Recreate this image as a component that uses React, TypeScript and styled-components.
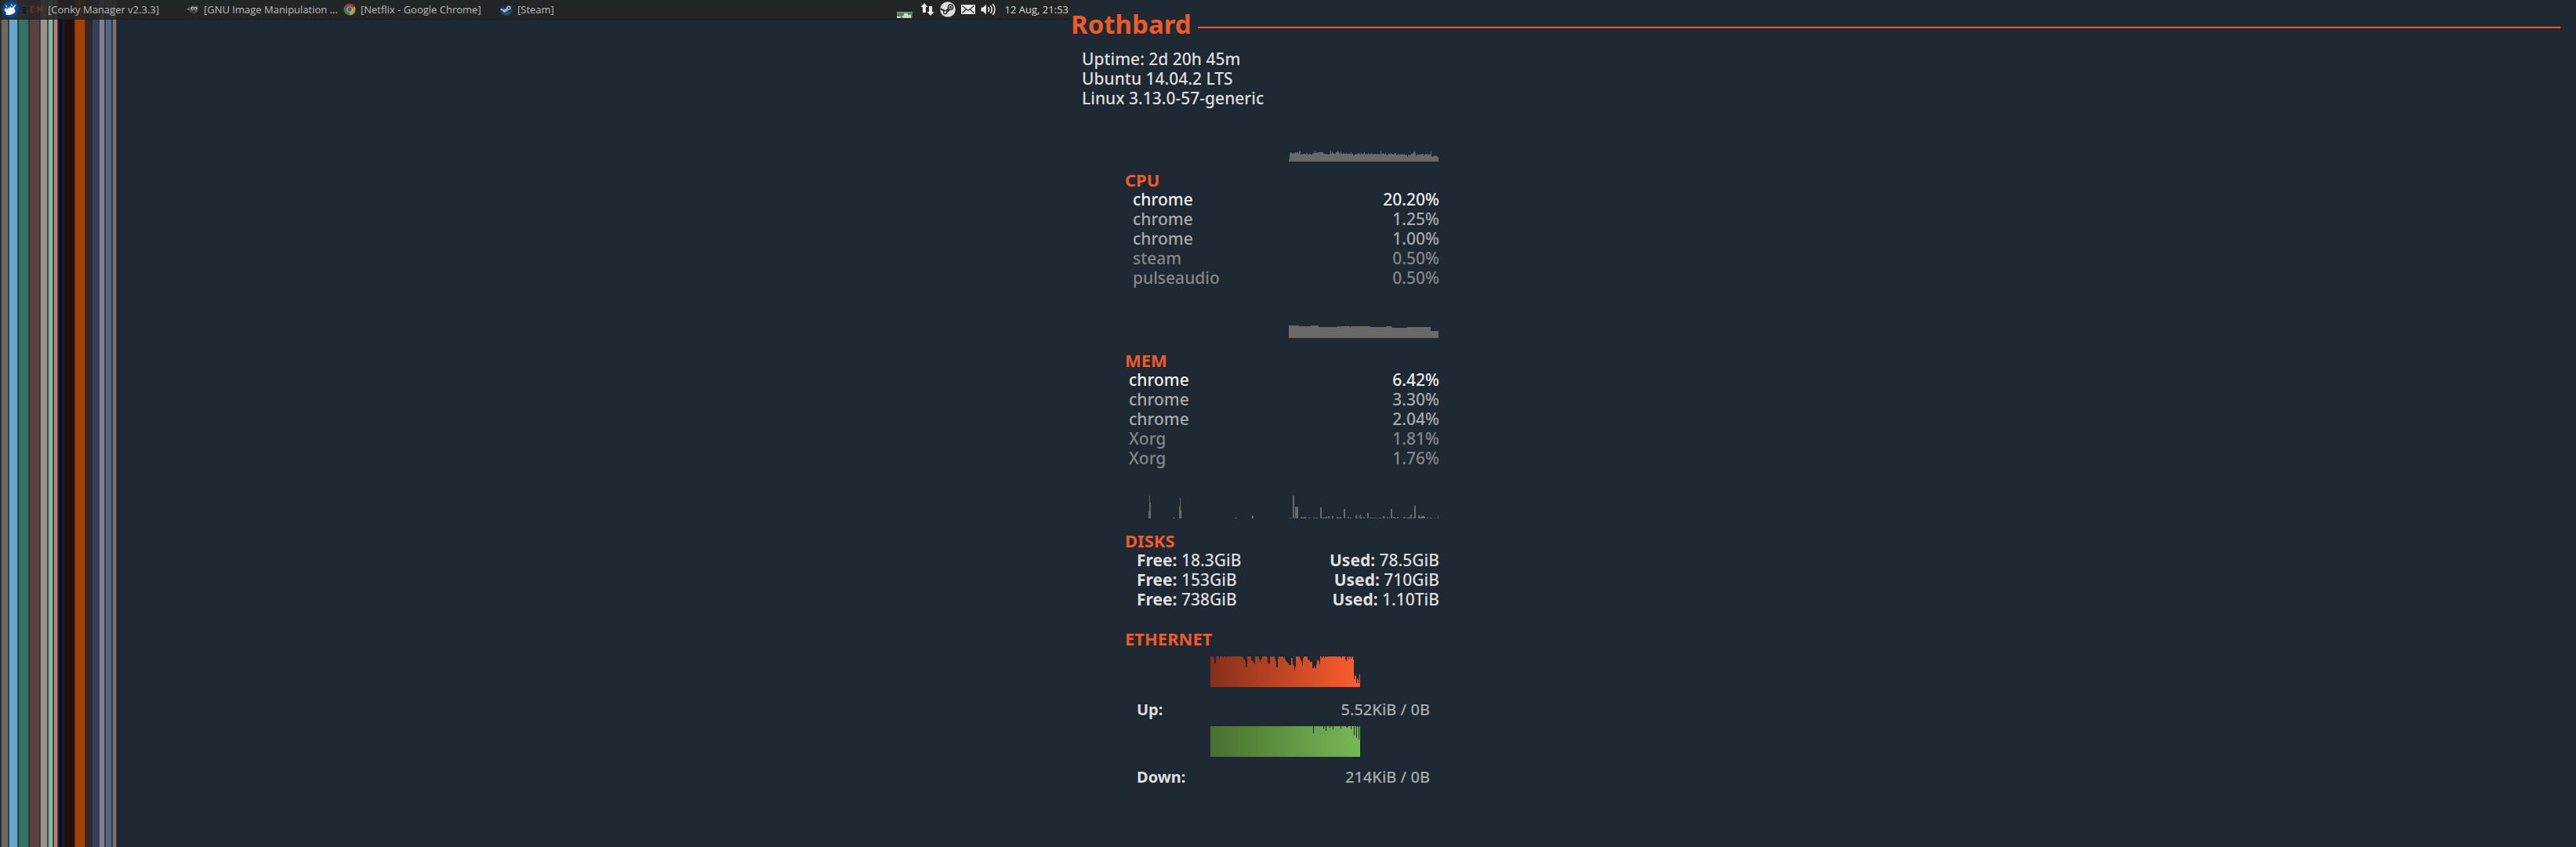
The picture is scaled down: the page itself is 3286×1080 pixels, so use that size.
import React from "react";
import styled, { createGlobalStyle, css } from "styled-components";

const colors = {
  desktop: "#1e2934",
  accent: "#f05a28",
  bright: "#efefef",
  text: "#dedede",
  muted: "#a9a9a9",
  dim: "#868686",
  graph: "#696969",
};

const GlobalStyle = createGlobalStyle`
  *, *::before, *::after { box-sizing: border-box; }
  body { margin: 0; background: ${colors.desktop}; }
  h1, h2, p, ul, dl, dd { margin: 0; padding: 0; }
  ul { list-style: none; }
`;

const Desktop = styled.div`
  display: grid;
  grid-template-columns: 683fr 960fr;
  min-height: 100vh;
  background: ${colors.desktop};
`;

/* ---------- left monitor ---------- */

const LeftMonitor = styled.section`
  display: grid;
  grid-template-columns: minmax(0, 1fr);
  grid-template-rows: 25px 1fr;
`;

const Stripes = styled.div`
  grid-row: 1 / 3;
  grid-column: 1;
  display: flex;
  padding-left: 2px;
`;

const Stripe = styled.div<{ $width: number; $gap: number; $color: string }>`
  flex: none;
  width: ${(p) => p.$width}px;
  margin-right: ${(p) => p.$gap}px;
  background: ${(p) => p.$color};
  box-shadow: 0 0 0 1px ${(p) => p.$color}44;
`;

const Panel = styled.header`
  grid-row: 1;
  grid-column: 1;
  z-index: 1;
  display: flex;
  align-items: center;
  padding: 0 3px 1px 2px;
  background: rgba(36, 37, 37, 0.88);
  border-bottom: 1px solid #1b1d1f;
  color: #b9b9b9;
  font: 400 13px/22px "Open Sans", "Noto Sans", sans-serif;
`;

const PanelButton = styled.button`
  display: flex;
  flex: none;
  padding: 0;
  border: 0;
  background: none;
  color: inherit;
`;

const Grip = styled.span`
  width: 4px;
  height: 8px;
  margin: 2px 5px 0 5px;
  background: repeating-linear-gradient(#121314 0 2px, transparent 2px 3px);
`;

const Tasks = styled.nav`
  display: flex;
  flex: 1;
  min-width: 0;
`;

const Task = styled.button`
  display: flex;
  align-items: center;
  gap: 6px;
  width: 200px;
  padding: 0;
  border: 0;
  background: none;
  color: inherit;
  font: inherit;
  text-align: left;
  white-space: nowrap;

  svg { flex: none; }
`;

const Tray = styled.div`
  display: flex;
  align-items: center;
  gap: 7px;
`;

const BatteryButton = styled(PanelButton)`
  align-self: flex-end;
  margin-right: 3px;
`;

const Clock = styled.time`
  margin-left: 4px;
  color: #d2d2d2;
`;

/* ---------- right monitor ---------- */

const RightMonitor = styled.main`
  padding: 8px 20px 0 0;
  color: ${colors.text};
  font: 500 21px/25px "Noto Sans", sans-serif;
`;

const HostHeader = styled.header`
  display: flex;
  align-items: center;
`;

const HostName = styled.h1`
  color: ${colors.accent};
  font-size: 33px;
  line-height: 45px;
  font-weight: 700;
`;

const Rule = styled.div`
  flex: 1;
  height: 2px;
  margin: 9px 0 0 8px;
  background: ${colors.accent};
`;

const SystemInfo = styled.div`
  padding: 10px 0 0 14px;
`;

const Stats = styled.div`
  width: 401px;
  margin-left: 69px;
`;

const Section = styled.section<{ $top?: number }>`
  padding-top: ${(p) => p.$top ?? 25}px;
`;

const SectionTitle = styled.h2`
  color: ${colors.accent};
  font-size: 22px;
  line-height: 25px;
  font-weight: 700;
`;

const GraphRow = styled.div<{ $gap: number }>`
  display: flex;
  justify-content: flex-end;
  gap: 9px;
  padding: 0 1px ${(p) => p.$gap}px 0;
`;

const NetGraph = styled.div<{ $top: number; $gap: number }>`
  padding: ${(p) => p.$top}px 0 ${(p) => p.$gap}px 109px;
`;

const GraphSvg = styled.svg`
  display: block;
  width: 191px;
  height: 39px;
`;

const toneColor = { bright: colors.bright, muted: colors.muted, dim: colors.dim };
type Tone = keyof typeof toneColor;

const ProcessTable = styled.table<{ $indent: number }>`
  width: 100%;
  border-collapse: collapse;

  td { padding: 0; }
  td:first-child { padding-left: ${(p) => p.$indent}px; }
  td:last-child { text-align: right; }
`;

const ProcessRow = styled.tr<{ $tone: Tone }>`
  color: ${(p) => toneColor[p.$tone]};
`;

const pairRow = css`
  display: flex;
  justify-content: space-between;
  padding-left: 15px;
`;

const DiskRow = styled.li`
  ${pairRow}
`;

const NetRow = styled.p`
  ${pairRow}
  padding-right: 12px;
  font-size: 20px;
`;

const Label = styled.b`
  font-weight: 700;
`;

const Rate = styled.span`
  color: ${colors.muted};
`;

/* ---------- data ---------- */

type Run = [count: number, value: number];
const expand = (runs: Run[]) => runs.flatMap(([n, v]) => Array<number>(n).fill(v));
const sparse = (length: number, base: number, points: Record<number, number>) =>
  Array.from({ length }, (_, i) => points[i] ?? base);

const GRAPH_W = 191;
const GRAPH_H = 39;

const cpu = [
  3, 11, 12, 11, 10, 10, 11, 11, 12, 11, 12, 11, 10, 13, 14, 10, 9, 9, 10, 10, 10, 9, 10, 11,
  9, 9, 10, 10, 9, 9, 10, 11, 11, 14, 11, 11, 12, 11, 12, 12, 12, 12, 12, 12, 10, 10, 10, 9,
  10, 9, 9, 9, 10, 14, 10, 12, 11, 10, 10, 10, 12, 12, 14, 12, 11, 10, 13, 10, 10, 11, 10, 10,
  10, 11, 10, 10, 10, 10, 10, 12, 10, 10, 8, 8, 9, 10, 9, 10, 10, 11, 10, 9, 11, 10, 9, 11,
  12, 10, 9, 10, 9, 11, 10, 9, 10, 11, 10, 9, 10, 10, 10, 9, 10, 10, 9, 10, 9, 14, 10, 10,
  11, 10, 9, 11, 9, 8, 9, 11, 10, 9, 11, 10, 9, 9, 10, 11, 10, 8, 9, 10, 8, 10, 9, 9,
  10, 9, 9, 10, 8, 9, 8, 6, 9, 9, 8, 9, 10, 10, 11, 12, 13, 11, 7, 9, 9, 9, 9, 9,
  10, 9, 10, 10, 7, 9, 10, 9, 10, 8, 10, 9, 9, 13, 6, 6, 7, 7, 8, 7, 7, 6, 6,
];

const mem = expand([
  [13, 16], [15, 15], [10, 16], [24, 14], [3, 15], [1, 14], [12, 15], [1, 14],
  [25, 15], [20, 14], [7, 15], [1, 14], [19, 13], [30, 14], [10, 9],
]);

const diskRead = sparse(GRAPH_W, 0, {
  21: 9, 22: 29, 23: 20, 52: 1, 53: 1, 54: 1, 60: 15, 61: 26, 62: 11, 63: 1,
  131: 1, 132: 1, 133: 1, 152: 1, 153: 4, 154: 3,
});

const diskWrite = sparse(GRAPH_W, 0, {
  1: 1, 2: 1, 5: 29, 6: 29, 8: 15, 9: 15, 10: 14, 11: 15, 15: 2, 16: 2, 17: 1, 18: 1, 19: 1,
  20: 2, 21: 2, 25: 1, 26: 1, 31: 1, 32: 1, 34: 1, 35: 1, 36: 1, 40: 14, 41: 14, 43: 1, 44: 1,
  45: 1, 46: 1, 47: 2, 48: 2, 50: 3, 51: 3, 55: 3, 56: 3, 61: 2, 62: 2, 63: 1, 64: 1, 65: 2,
  66: 2, 70: 12, 71: 12, 75: 2, 76: 2, 78: 1, 79: 1, 85: 4, 86: 5, 87: 1, 90: 4, 91: 5, 92: 1,
  93: 1, 95: 2, 96: 1, 100: 7, 101: 7, 104: 1, 105: 1, 106: 1, 108: 1, 109: 1, 111: 1, 115: 1,
  116: 1, 117: 1, 120: 3, 121: 3, 122: 1, 125: 2, 126: 1, 128: 1, 130: 12, 131: 12, 133: 2,
  134: 2, 135: 1, 136: 1, 138: 2, 139: 2, 146: 1, 147: 2, 148: 1, 150: 1, 151: 1, 152: 1,
  153: 2, 154: 1, 155: 5, 156: 5, 158: 1, 159: 1, 160: 16, 161: 16, 165: 4, 166: 4, 167: 2,
  168: 2, 169: 3, 170: 3, 171: 4, 172: 3, 173: 2, 176: 1, 177: 1, 180: 1, 181: 1, 182: 1,
  186: 1, 190: 4,
});

const upload = expand([
  [4, 0], [1, 3], [1, 10], [1, 8], [1, 1], [3, 0], [1, 3], [4, 0], [1, 2], [3, 0], [1, 1],
  [4, 0], [1, 1], [14, 0], [2, 1], [1, 4], [1, 3], [1, 6], [1, 14], [1, 13], [5, 0], [1, 5],
  [1, 6], [1, 5], [1, 8], [1, 10], [5, 0], [1, 4], [1, 7], [1, 4], [1, 3], [6, 0], [1, 1],
  [1, 8], [1, 10], [1, 9], [2, 0], [1, 1], [3, 0], [1, 3], [1, 6], [2, 14], [1, 3], [2, 0],
  [1, 1], [3, 0], [1, 2], [1, 1], [1, 4], [1, 6], [1, 7], [1, 8], [1, 9], [3, 11], [2, 2],
  [1, 10], [1, 12], [1, 18], [1, 13], [5, 0], [1, 2], [1, 5], [1, 7], [1, 11], [1, 2], [5, 0],
  [1, 4], [2, 5], [3, 7], [2, 15], [1, 13], [2, 15], [1, 10], [1, 5], [1, 4], [1, 6], [1, 10],
  [2, 0], [1, 2], [2, 0], [1, 2], [2, 0], [1, 1], [12, 0], [1, 1], [4, 0], [1, 1], [1, 2],
  [4, 0], [1, 4], [1, 6], [1, 1], [1, 0], [1, 4], [2, 0], [1, 3], [1, 1], [1, 0], [1, 4],
  [1, 29], [1, 24], [1, 25], [1, 34], [1, 28], [1, 30], [1, 34], [1, 23],
]).map((drop) => GRAPH_H - drop);

const download = sparse(GRAPH_W, GRAPH_H, {
  131: 30, 144: 36, 147: 33, 152: 37, 156: 35, 166: 36, 173: 38, 174: 37, 179: 35,
  183: 27, 186: 24, 188: 38, 189: 22,
});

const stripes: Array<[width: number, gap: number, color: string]> = [
  [8, 2, "#71675f"], [10, 2, "#66a9c6"], [12, 2, "#357263"], [12, 2, "#5b413d"],
  [8, 2, "#9c938c"], [5, 2, "#86b79d"], [4, 2, "#bc7e74"], [5, 2, "#0b1126"],
  [12, 2, "#220f0e"], [12, 1, "#a54203"], [7, 2, "#382523"], [8, 1, "#364058"],
  [6, 2, "#827f8e"], [7, 2, "#556586"], [4, 0, "#847169"],
];

interface Process { name: string; value: string; tone: Tone }

const cpuProcesses: Process[] = [
  { name: "chrome", value: "20.20%", tone: "bright" },
  { name: "chrome", value: "1.25%", tone: "muted" },
  { name: "chrome", value: "1.00%", tone: "muted" },
  { name: "steam", value: "0.50%", tone: "dim" },
  { name: "pulseaudio", value: "0.50%", tone: "dim" },
];

const memProcesses: Process[] = [
  { name: "chrome", value: "6.42%", tone: "bright" },
  { name: "chrome", value: "3.30%", tone: "muted" },
  { name: "chrome", value: "2.04%", tone: "muted" },
  { name: "Xorg", value: "1.81%", tone: "dim" },
  { name: "Xorg", value: "1.76%", tone: "dim" },
];

const disks = [
  { free: "18.3GiB", used: "78.5GiB" },
  { free: "153GiB", used: "710GiB" },
  { free: "738GiB", used: "1.10TiB" },
];

/* ---------- pieces ---------- */

function Graph({ values, id, from = colors.graph, to = colors.graph, label }: {
  values: number[]; id: string; from?: string; to?: string; label: string;
}) {
  const steps = values.map((v, i) => `V${GRAPH_H - v}H${i + 1}`).join("");
  return (
    <GraphSvg viewBox={`0 0 ${GRAPH_W} ${GRAPH_H}`} role="img" aria-label={label} shapeRendering="crispEdges">
      <defs>
        <linearGradient id={id} gradientUnits="userSpaceOnUse" x1="0" y1="0" x2={GRAPH_W} y2="0">
          <stop offset="0" stopColor={from} />
          <stop offset="1" stopColor={to} />
        </linearGradient>
      </defs>
      <path d={`M0 ${GRAPH_H}${steps}V${GRAPH_H}Z`} fill={`url(#${id})`} />
    </GraphSvg>
  );
}

function Processes({ rows, indent }: { rows: Process[]; indent: number }) {
  return (
    <ProcessTable $indent={indent}>
      <tbody>
        {rows.map((row, i) => (
          <ProcessRow key={i} $tone={row.tone}>
            <td>{row.name}</td>
            <td>{row.value}</td>
          </ProcessRow>
        ))}
      </tbody>
    </ProcessTable>
  );
}

const XfceLogo = () => (
  <svg width="22" height="22" viewBox="0 0 22 22">
    <circle cx="11" cy="11" r="10.5" fill="#0647a8" />
    <path
      d="M4 13C3 10 5 8.500 7 10L8 10.500 8.500 8 10 10 11 6.500 13 9.500 16.500 5.500 16 10C18.500 12 18 15 14.500 16.500 11 18.500 6.500 18.500 5 16.500L6.500 15.500Z"
      fill="#fff"
    />
    <path d="M5.500 5.500L7 8.500M12.500 4L13.500 7M18 5L16 8.500" stroke="#dfe9f8" strokeWidth="1.200" />
  </svg>
);

const ConkyIcon = () => (
  <svg width="17" height="16" viewBox="0 0 17 16">
    <path d="M2 4v8M1 4.500h4M1 11.500h4M8 6v1M8 10v1M10.500 12V4.500L13 9l2.500-4.500V12" fill="none" stroke="#6a3534" strokeWidth="1.500" />
  </svg>
);

const GimpIcon = () => (
  <svg width="16" height="16" viewBox="0 0 16 16">
    <path d="M1 7L3 5 6 5 8 3 11 5 14 2.500 15 6C15 10 13 13 9 13 6 13 4 11 3.500 8.500Z" fill="#55534e" />
    <path d="M0 7.500L3 6.500V9Z" fill="#8f8b83" />
    <circle cx="7.500" cy="6.500" r="2" fill="#b9b9b5" />
    <circle cx="11.500" cy="6.500" r="2" fill="#b9b9b5" />
    <circle cx="7.800" cy="6.800" r="0.900" fill="#1c1c1c" />
    <circle cx="11.200" cy="6.800" r="0.900" fill="#1c1c1c" />
    <path d="M6 11L11 10.500" stroke="#222" strokeWidth="1" />
  </svg>
);

const ChromeIcon = () => (
  <svg width="16" height="16" viewBox="0 0 16 16">
    <path d="M8 8L1.500 4.250A7.500 7.500 0 0 1 14.500 4.250Z" fill="#a83a32" />
    <path d="M8 8L14.500 4.250A7.500 7.500 0 0 1 8 15.500Z" fill="#b99a34" />
    <path d="M8 8V15.500A7.500 7.500 0 0 1 1.500 4.250Z" fill="#427d43" />
    <circle cx="8" cy="8" r="3.600" fill="#b7bcc2" />
    <circle cx="8" cy="8" r="2.700" fill="#2f5f9f" />
  </svg>
);

const SteamTaskIcon = () => (
  <svg width="16" height="16" viewBox="0 0 16 16">
    <defs>
      <linearGradient id="steam-task" x1="0" y1="0" x2="0" y2="1">
        <stop offset="0" stopColor="#15202f" />
        <stop offset="1" stopColor="#1c5a8a" />
      </linearGradient>
    </defs>
    <circle cx="8" cy="8" r="7.800" fill="url(#steam-task)" />
    <path d="M0.500 7.500L5 9.500 11 5.500M5 10.500L9.500 9" stroke="#a7adb3" strokeWidth="2" fill="none" />
    <circle cx="11" cy="6" r="2.700" fill="#a7adb3" />
    <circle cx="11" cy="6" r="1.200" fill="#25405c" />
    <circle cx="5.500" cy="10" r="1.900" fill="#a7adb3" />
  </svg>
);

const BatteryIcon = () => (
  <svg width="20" height="8" viewBox="0 0 20 8">
    <rect width="20" height="8" fill="#567f68" />
    <path d="M0 .5H20" stroke="#7d9a88" />
    <path d="M9 2h5v2h4v4H7V5h2Z" fill="#c9dcbf" />
    <path d="M0 6h5v2H0Z" fill="#d8e4d4" />
  </svg>
);

const NetworkIcon = () => (
  <svg width="18" height="18" viewBox="0 0 18 18" fill="#eee">
    <path d="M5 1L9.500 6H7V13H3V6H.5ZM13 17L8.500 12H11V5H15V12H17.500Z" />
  </svg>
);

const SteamTrayIcon = () => (
  <svg width="20" height="20" viewBox="0 0 20 20">
    <circle cx="10" cy="10" r="9.800" fill="#dcdcdc" />
    <path d="M.4 9L7 12.500 13 7.500M7 14L12 10.500" stroke="#303030" strokeWidth="2.200" fill="none" />
    <circle cx="13.500" cy="7" r="3.900" fill="#303030" />
    <circle cx="13.500" cy="7" r="2.400" fill="#dcdcdc" />
    <circle cx="13.500" cy="7" r="1.600" fill="#303030" />
    <circle cx="6.800" cy="13.600" r="2.800" fill="#303030" />
    <circle cx="6.800" cy="13.600" r="1.500" fill="#dcdcdc" />
  </svg>
);

const MailIcon = () => (
  <svg width="18" height="12" viewBox="0 0 18 12">
    <rect width="18" height="12" fill="#e6e6e6" />
    <path d="M1.500 1.500L9 7.500 16.500 1.500M1.500 10.500L6.500 6M16.500 10.500L11.500 6" fill="none" stroke="#2b2b2b" strokeWidth="1.200" />
  </svg>
);

const VolumeIcon = () => (
  <svg width="20" height="16" viewBox="0 0 20 16">
    <path d="M.5 5.500H3L7 1.500V14.500L3 10.500H.5Z" fill="#e6e6e6" />
    <path d="M9.500 5Q11.500 8 9.500 11M12.500 3Q16 8 12.500 13M15.500 1Q20.500 8 15.500 15" fill="none" stroke="#e6e6e6" strokeWidth="1.600" />
  </svg>
);

const tasks = [
  { title: "[Conky Manager v2.3.3]", icon: <ConkyIcon /> },
  { title: "[GNU Image Manipulation ...", icon: <GimpIcon /> },
  { title: "[Netflix - Google Chrome]", icon: <ChromeIcon /> },
  { title: "[Steam]", icon: <SteamTaskIcon /> },
];

export default function App() {
  return (
    <>
      <GlobalStyle />
      <Desktop>
        <LeftMonitor>
          <Stripes aria-hidden="true">
            {stripes.map(([width, gap, color]) => (
              <Stripe key={color} $width={width} $gap={gap} $color={color} />
            ))}
          </Stripes>
          <Panel>
            <PanelButton aria-label="Applications"><XfceLogo /></PanelButton>
            <Grip />
            <Tasks aria-label="Open windows">
              {tasks.map((task) => (
                <Task key={task.title}>
                  {task.icon}
                  {task.title}
                </Task>
              ))}
            </Tasks>
            <Tray>
              <BatteryButton aria-label="Battery"><BatteryIcon /></BatteryButton>
              <PanelButton aria-label="Network"><NetworkIcon /></PanelButton>
              <PanelButton aria-label="Steam"><SteamTrayIcon /></PanelButton>
              <PanelButton aria-label="Mail"><MailIcon /></PanelButton>
              <PanelButton aria-label="Volume"><VolumeIcon /></PanelButton>
              <Clock>12 Aug, 21:53</Clock>
            </Tray>
          </Panel>
        </LeftMonitor>

        <RightMonitor>
          <HostHeader>
            <HostName>Rothbard</HostName>
            <Rule />
          </HostHeader>
          <SystemInfo>
            <p>Uptime: 2d 20h 45m</p>
            <p>Ubuntu 14.04.2 LTS</p>
            <p>Linux 3.13.0-57-generic</p>
          </SystemInfo>

          <Stats>
            <Section $top={29}>
              <GraphRow $gap={11}><Graph id="cpu" values={cpu} label="CPU load" /></GraphRow>
              <SectionTitle>CPU</SectionTitle>
              <Processes rows={cpuProcesses} indent={10} />
            </Section>
            <Section>
              <GraphRow $gap={16}><Graph id="mem" values={mem} label="Memory use" /></GraphRow>
              <SectionTitle>MEM</SectionTitle>
              <Processes rows={memProcesses} indent={5} />
            </Section>
            <Section>
              <GraphRow $gap={16}>
                <Graph id="disk-read" values={diskRead} label="Disk reads" />
                <Graph id="disk-write" values={diskWrite} label="Disk writes" />
              </GraphRow>
              <SectionTitle>DISKS</SectionTitle>
              <ul>
                {disks.map((disk) => (
                  <DiskRow key={disk.free}>
                    <span><Label>Free:</Label> {disk.free}</span>
                    <span><Label>Used:</Label> {disk.used}</span>
                  </DiskRow>
                ))}
              </ul>
            </Section>
            <Section>
              <SectionTitle>ETHERNET</SectionTitle>
              <NetGraph $top={10} $gap={16}>
                <Graph id="upload" values={upload} from="#85301a" to="#ff5e2d" label="Upload rate" />
              </NetGraph>
              <NetRow><Label>Up:</Label><Rate>5.52KiB / 0B</Rate></NetRow>
              <NetGraph $top={9} $gap={13}>
                <Graph id="download" values={download} from="#48702f" to="#78b856" label="Download rate" />
              </NetGraph>
              <NetRow><Label>Down:</Label><Rate>214KiB / 0B</Rate></NetRow>
            </Section>
          </Stats>
        </RightMonitor>
      </Desktop>
    </>
  );
}
